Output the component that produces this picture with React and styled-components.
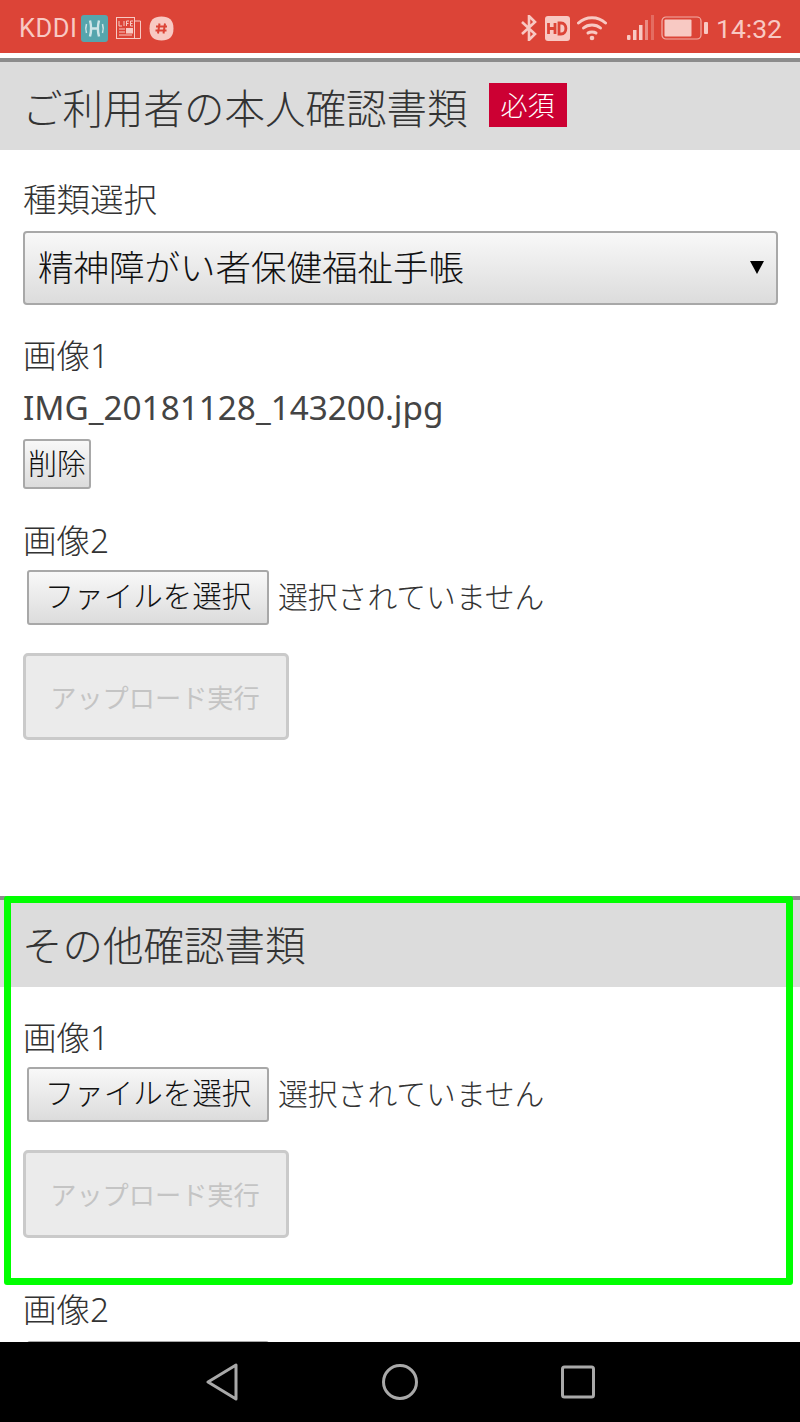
import React from 'react';
import styled, { createGlobalStyle } from 'styled-components';

const GlobalStyle = createGlobalStyle`
  html, body {
    margin: 0;
    padding: 0;
    background: #fff;
  }
  * {
    box-sizing: border-box;
  }
`;

const Screen = styled.div`
  width: 800px;
  height: 1422px;
  display: flex;
  flex-direction: column;
  overflow: hidden;
  font-family: "Noto Sans", "Noto Sans CJK JP", sans-serif;
  color: #3a3a3a;
`;

const StatusBar = styled.div`
  height: 53px;
  flex: none;
  display: flex;
  align-items: center;
  justify-content: space-between;
  padding: 3px 18px 0 19px;
  background: #dc4437;
  color: #f8c9c3;
  font-family: Roboto, sans-serif;
`;

const StatusGroup = styled.div`
  display: flex;
  align-items: center;
  gap: ${(p) => p.$gap || 7}px;
`;

const Carrier = styled.span`
  font-size: 25.5px;
  letter-spacing: 0.5px;
  margin-right: -4px;
`;

const Clock = styled.span`
  font-size: 26.5px;
  margin-left: 1px;
`;

const SignalGap = styled.span`
  width: 6px;
`;

const Content = styled.main`
  flex: 1;
  min-height: 0;
  overflow: hidden;
  padding-top: 5px;
`;

const Section = styled.section`
  position: relative;
  height: ${(p) => p.$height}px;
  border-top: 4px solid #8c8c8c;
`;

const SectionHead = styled.h2`
  margin: 0;
  height: ${(p) => p.$height || 88}px;
  display: flex;
  align-items: center;
  gap: 21px;
  padding: 0 22px;
  background: #dcdcdc;
  font-size: 40.5px;
  font-weight: 300;
  color: #333;
  white-space: nowrap;
`;

const Required = styled.span`
  height: 44px;
  width: 78px;
  display: flex;
  align-items: center;
  justify-content: center;
  background: #cc0033;
  color: #fff;
  font-size: 27px;
  font-weight: 300;
  margin-top: -3px;
`;

const SectionBody = styled.div`
  padding: ${(p) => p.$top || 0}px 23px 0;
`;

const Label = styled.div`
  font-size: 33.5px;
  line-height: 50px;
  font-weight: 300;
  margin-top: ${(p) => p.$top || 0}px;
  margin-bottom: 4px;
  color: #333;
  white-space: nowrap;
`;

const FileName = styled.div`
  font-size: 33.3px;
  line-height: 46px;
  font-weight: 400;
  margin-bottom: 4px;
  color: #444;
`;

const SelectWrap = styled.div`
  position: relative;
  margin-top: 7px;

  &::after {
    content: "";
    position: absolute;
    right: 13px;
    top: 30px;
    border-left: 7px solid transparent;
    border-right: 7px solid transparent;
    border-top: 13px solid #000;
  }
`;

const Select = styled.select`
  display: block;
  width: 755px;
  height: 74px;
  padding: 0 0 2px 13px;
  appearance: none;
  border: 2px solid #a8a8a8;
  border-radius: 4px;
  background: linear-gradient(#f8f8f8, #dcdcdc);
  font-family: inherit;
  font-size: 35.5px;
  font-weight: 300;
  color: #111;
`;

const DeleteButton = styled.button`
  display: block;
  height: 50px;
  width: 68px;
  margin-top: 9px;
  padding: 0 0 4px;
  border: 2px solid #a8a8a8;
  border-radius: 3px;
  background: linear-gradient(#f8f8f8, #dcdcdc);
  font-family: inherit;
  font-size: 29px;
  font-weight: 300;
  color: #111;
`;

const FileRow = styled.div`
  display: flex;
  align-items: center;
  gap: 9px;
  margin: ${(p) => p.$top || 5}px 0 0 4px;
`;

const FileButton = styled.button`
  width: 242px;
  height: 55px;
  padding: 0 0 6px;
  border: 2px solid #a8a8a8;
  border-radius: 3px;
  background: linear-gradient(#f8f8f8, #dcdcdc);
  font-family: inherit;
  font-size: 29.5px;
  font-weight: 300;
  color: #111;
  white-space: nowrap;
`;

const NoFile = styled.span`
  font-size: 29.8px;
  font-weight: 300;
  color: #333;
  white-space: nowrap;
  position: relative;
  top: -3px;
`;

const UploadButton = styled.button`
  display: block;
  width: 266px;
  height: ${(p) => p.$height || 87}px;
  margin-top: 28px;
  padding: 0 2px 0 0;
  border: 3px solid #cacaca;
  border-radius: 5px;
  background: #ebebeb;
  font-family: inherit;
  font-size: 26.2px;
  color: #c4c4c4;
  white-space: nowrap;
`;

const Highlight = styled.div`
  position: absolute;
  left: 4px;
  top: -4px;
  width: 789px;
  height: 389px;
  border: 7px solid #00ff00;
  border-radius: 3px;
  pointer-events: none;
`;

const NavBar = styled.nav`
  height: 80px;
  flex: none;
  display: flex;
  align-items: center;
  justify-content: center;
  gap: 142px;
  background: #000;
  color: #a9a9a9;
`;

const CellularIcon = () => (
  <svg width="27" height="26" viewBox="0 0 27 26">
    <rect x="0" y="20" width="3.5" height="5" rx="1" fill="currentColor" />
    <rect x="6" y="15" width="3.5" height="10" fill="currentColor" />
    <rect x="12" y="10" width="3.5" height="15" fill="currentColor" />
    <rect x="18" y="5" width="3" height="20" fill="currentColor" opacity="0.55" />
    <rect x="24" y="0" width="3" height="25" fill="currentColor" opacity="0.3" />
  </svg>
);

const BatteryIcon = () => (
  <svg width="47" height="24" viewBox="0 0 47 24">
    <rect x="1" y="1" width="39" height="22" rx="4" fill="none" stroke="currentColor" strokeWidth="1.2" opacity="0.8" />
    <rect x="3.5" y="3.5" width="27" height="17" rx="1" fill="currentColor" />
    <rect x="43" y="6" width="4" height="12" rx="1" fill="currentColor" />
  </svg>
);

const WifiIcon = () => (
  <svg width="30" height="26" viewBox="0 0 30 26" fill="none" stroke="currentColor" strokeWidth="3" strokeLinecap="round">
    <path d="M1.5 8 C9 1 21 1 28.5 8" />
    <path d="M6.5 13 C11 9 19 9 23.5 13" />
    <path d="M11 18 C13 16.5 17 16.5 19 18" />
    <circle cx="15" cy="23" r="2.3" fill="currentColor" stroke="none" />
  </svg>
);

const BluetoothIcon = () => (
  <svg width="18" height="26" viewBox="0 0 18 26" fill="none" stroke="currentColor" strokeWidth="2.6">
    <path d="M2 7 L15 19 L9 25 V1 L15 7 L2 19" />
  </svg>
);

const HdIcon = () => (
  <svg width="25" height="25" viewBox="0 0 25 25">
    <rect width="25" height="25" rx="3" fill="currentColor" />
    <path d="M3.5 7 V18 M10 7 V18 M3.5 12.5 H10" stroke="#dc4437" strokeWidth="2.8" fill="none" />
    <path d="M14 7 V18 H16 C22.5 18 22.5 7 16 7 Z" stroke="#dc4437" strokeWidth="2.8" fill="none" />
  </svg>
);

const TealAppIcon = () => (
  <svg width="27" height="27" viewBox="0 0 27 27">
    <rect width="27" height="27" rx="3" fill="#56a5ad" />
    <g fill="none" stroke="#cfe5e7" strokeWidth="1.5">
      <path d="M5.5 9 C4.5 12 4.5 15 5.5 18" />
      <path d="M21.5 9 C22.5 12 22.5 15 21.5 18" />
      <path d="M9 5.5 C10.5 11 10.5 16 9 21.5 M18 5.5 C16.5 11 16.5 16 18 21.5 M10 13.5 H17" strokeWidth="2.4" />
    </g>
  </svg>
);

const NewsIcon = () => (
  <svg width="25" height="24" viewBox="0 0 25 24" fill="none" stroke="currentColor" strokeWidth="1">
    <rect x="0.5" y="1.5" width="18" height="21" />
    <path d="M18.5 5 H24.5 V22.5 H18.5" />
    <path d="M3 5 V10 H6 M8 5 V10 M10.5 10 V5 H13 M10.5 7.5 H12.5 M17 5 H14.5 V10 H17 M14.5 7.5 H16.5" />
    <path d="M3 13 H9 M3 16 H9 M3 19 H16" />
    <rect x="10.5" y="12.5" width="6" height="4.5" fill="currentColor" />
  </svg>
);

const SlackIcon = () => (
  <svg width="25" height="25" viewBox="0 0 25 25">
    <path d="M12.5 0.5 C20 0.5 24.5 4 24.5 12.5 C24.5 21 20 24.5 12.5 24.5 C5 24.5 0.5 21 0.5 12.5 C0.5 4 5 0.5 12.5 0.5 Z" fill="currentColor" />
    <path d="M10.5 7.5 L9 17.5 M16 7.5 L14.5 17.5 M7 10.5 H18 M6.5 14.5 H17.5" stroke="#dc4437" strokeWidth="2" fill="none" />
  </svg>
);

const BackIcon = () => (
  <svg width="36" height="38" viewBox="0 0 36 38" fill="none" stroke="currentColor" strokeWidth="3" strokeLinejoin="round">
    <path d="M32 2 V36 L4 19 Z" />
  </svg>
);

const HomeIcon = () => (
  <svg width="36" height="38" viewBox="0 0 36 38" fill="none" stroke="currentColor" strokeWidth="3">
    <circle cx="18" cy="19" r="16.5" />
  </svg>
);

const RecentIcon = () => (
  <svg width="36" height="38" viewBox="0 0 36 38" fill="none" stroke="currentColor" strokeWidth="3" strokeLinejoin="round">
    <rect x="2.5" y="4" width="31" height="30" rx="2" />
  </svg>
);

const App = () => {
  return (
    <Screen>
      <GlobalStyle />
      <StatusBar>
        <StatusGroup $gap={8}>
          <Carrier>KDDI</Carrier>
          <TealAppIcon />
          <NewsIcon />
          <SlackIcon />
        </StatusGroup>
        <StatusGroup>
          <BluetoothIcon />
          <HdIcon />
          <WifiIcon />
          <SignalGap />
          <CellularIcon />
          <BatteryIcon />
          <Clock>14:32</Clock>
        </StatusGroup>
      </StatusBar>

      <Content>
        <Section $height={838}>
          <SectionHead>
            ご利用者の本人確認書類
            <Required>必須</Required>
          </SectionHead>
          <SectionBody $top={24}>
            <Label>種類選択</Label>
            <SelectWrap>
              <Select defaultValue="seishin">
                <option value="seishin">精神障がい者保健福祉手帳</option>
              </Select>
            </SelectWrap>
            <Label $top={25}>画像1</Label>
            <FileName>IMG_20181128_143200.jpg</FileName>
            <DeleteButton>削除</DeleteButton>
            <Label $top={26}>画像2</Label>
            <FileRow>
              <FileButton>ファイルを選択</FileButton>
              <NoFile>選択されていません</NoFile>
            </FileRow>
            <UploadButton disabled>アップロード実行</UploadButton>
          </SectionBody>
        </Section>

        <Section $height={500}>
          <SectionHead $height={87}>その他確認書類</SectionHead>
          <SectionBody $top={25}>
            <Label>画像1</Label>
            <FileRow>
              <FileButton>ファイルを選択</FileButton>
              <NoFile>選択されていません</NoFile>
            </FileRow>
            <UploadButton $height={88} disabled>アップロード実行</UploadButton>
            <Label $top={46}>画像2</Label>
            <FileRow $top={7}>
              <FileButton />
            </FileRow>
          </SectionBody>
          <Highlight />
        </Section>
      </Content>

      <NavBar>
        <BackIcon />
        <HomeIcon />
        <RecentIcon />
      </NavBar>
    </Screen>
  );
};

export default App;
